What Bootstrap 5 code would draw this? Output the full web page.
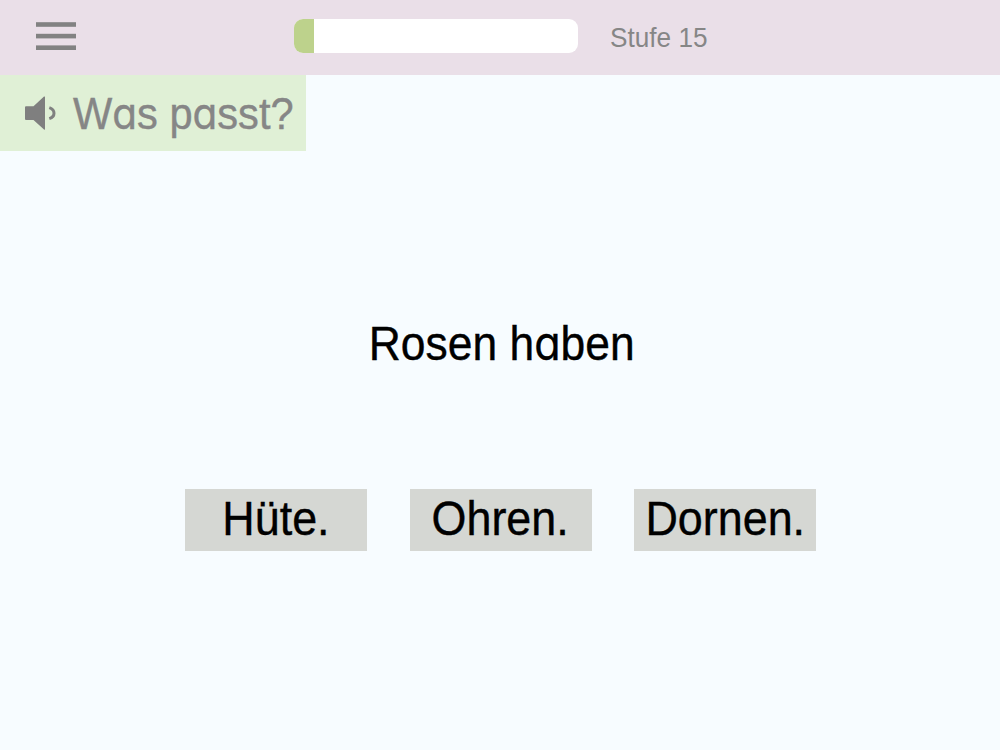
<!DOCTYPE html>
<html lang="de">
<head>
  <meta charset="UTF-8">
  <meta name="viewport" content="width=device-width, initial-scale=1">
  <title>Was passt?</title>
  <link href="https://cdn.jsdelivr.net/npm/bootstrap@5.3.3/dist/css/bootstrap.min.css" rel="stylesheet">
  <style>
    body {
      background: #f7fcff;
      color: #000;
      font-family: "Liberation Sans", Arial, sans-serif;
      height: 100vh;
      overflow: hidden;
    }
    .topbar { height: 75px; background: #eadfe8; padding-left: 36px; }
    .menu-btn { width: 40px; height: 30px; margin: -3px 217.5px 0 0; }
    .level-progress {
      --bs-progress-height: 34px;
      --bs-progress-bg: #fff;
      --bs-progress-bar-bg: #bdd28c;
      --bs-progress-border-radius: 9px;
      width: 284.5px;
      margin: -3px 31.5px 0 0;
    }
    .squeeze { display: inline-block; white-space: nowrap; line-height: 1; transform: scaleX(.925); -webkit-text-stroke: .4px; }
    .level { font-size: 28px; color: #868686; transform: scaleX(.935); transform-origin: left; -webkit-text-stroke: 0; }
    .task { width: 305.5px; height: 76px; background: #e0f0d6; color: #868686; padding-left: 24px; }
    .task-text { font-size: 45px; transform: scaleX(.925); transform-origin: left; margin: 1px 0 0 16px; }
    .sentence { font-size: 48px; margin: 169px 0 0 3px; }
    /* single-storey a, as in school print */
    .sa { font-family: Inter, sans-serif; font-feature-settings: "cv11"; font-size: .97em; line-height: 0; }
    .answers { gap: 42.5px; margin-top: 121px; padding-left: 1px; }
    .answer {
      width: 182px;
      height: 62px;
      padding: 0 0 4px;
      line-height: 1;
      font-size: 48.5px;
      --bs-btn-bg: #d5d7d3;
      --bs-btn-hover-bg: #c9ccc6;
      --bs-btn-color: #000;
    }
  </style>
</head>
<body>
  <nav class="topbar d-flex align-items-center">
    <button class="menu-btn btn p-0 border-0 d-flex" type="button" aria-label="Menü">
      <svg width="40" height="30" viewBox="0 0 40 30" fill="#828282">
        <rect y="1.2" width="40" height="4.6"/>
        <rect y="12.8" width="40" height="4.6"/>
        <rect y="24.4" width="40" height="4.6"/>
      </svg>
    </button>
    <div class="level-progress progress" role="progressbar" aria-valuenow="7" aria-valuemin="0" aria-valuemax="100">
      <div class="progress-bar" style="width: 7.2%"></div>
    </div>
    <span class="level squeeze">Stufe 15</span>
  </nav>

  <div class="task d-flex align-items-center">
    <svg class="flex-shrink-0" width="33" height="36" viewBox="0 0 33 36">
      <path d="M2 11.3H9.5L20 1.6Q21 1 21 2V34Q21 35 20 34.4L9.5 25H2Q1 25 1 24V12.3Q1 11.3 2 11.3Z" fill="#7f7f7f"/>
      <path d="M25.3 12.6Q30 14.2 30 18.2Q30 22 25.3 23.6" fill="none" stroke="#808080" stroke-width="3"/>
    </svg>
    <span class="task-text squeeze">W<span class="sa">a</span>s p<span class="sa">a</span>sst?</span>
  </div>

  <main class="text-center">
    <div class="sentence squeeze">Rosen h<span class="sa">a</span>ben</div>
    <div class="answers d-flex justify-content-center">
      <button type="button" class="answer btn rounded-0 border-0"><span class="squeeze">Hüte.</span></button>
      <button type="button" class="answer btn rounded-0 border-0"><span class="squeeze">Ohren.</span></button>
      <button type="button" class="answer btn rounded-0 border-0"><span class="squeeze">Dornen.</span></button>
    </div>
  </main>

  <script src="https://cdn.jsdelivr.net/npm/bootstrap@5.3.3/dist/js/bootstrap.bundle.min.js"></script>
</body>
</html>
